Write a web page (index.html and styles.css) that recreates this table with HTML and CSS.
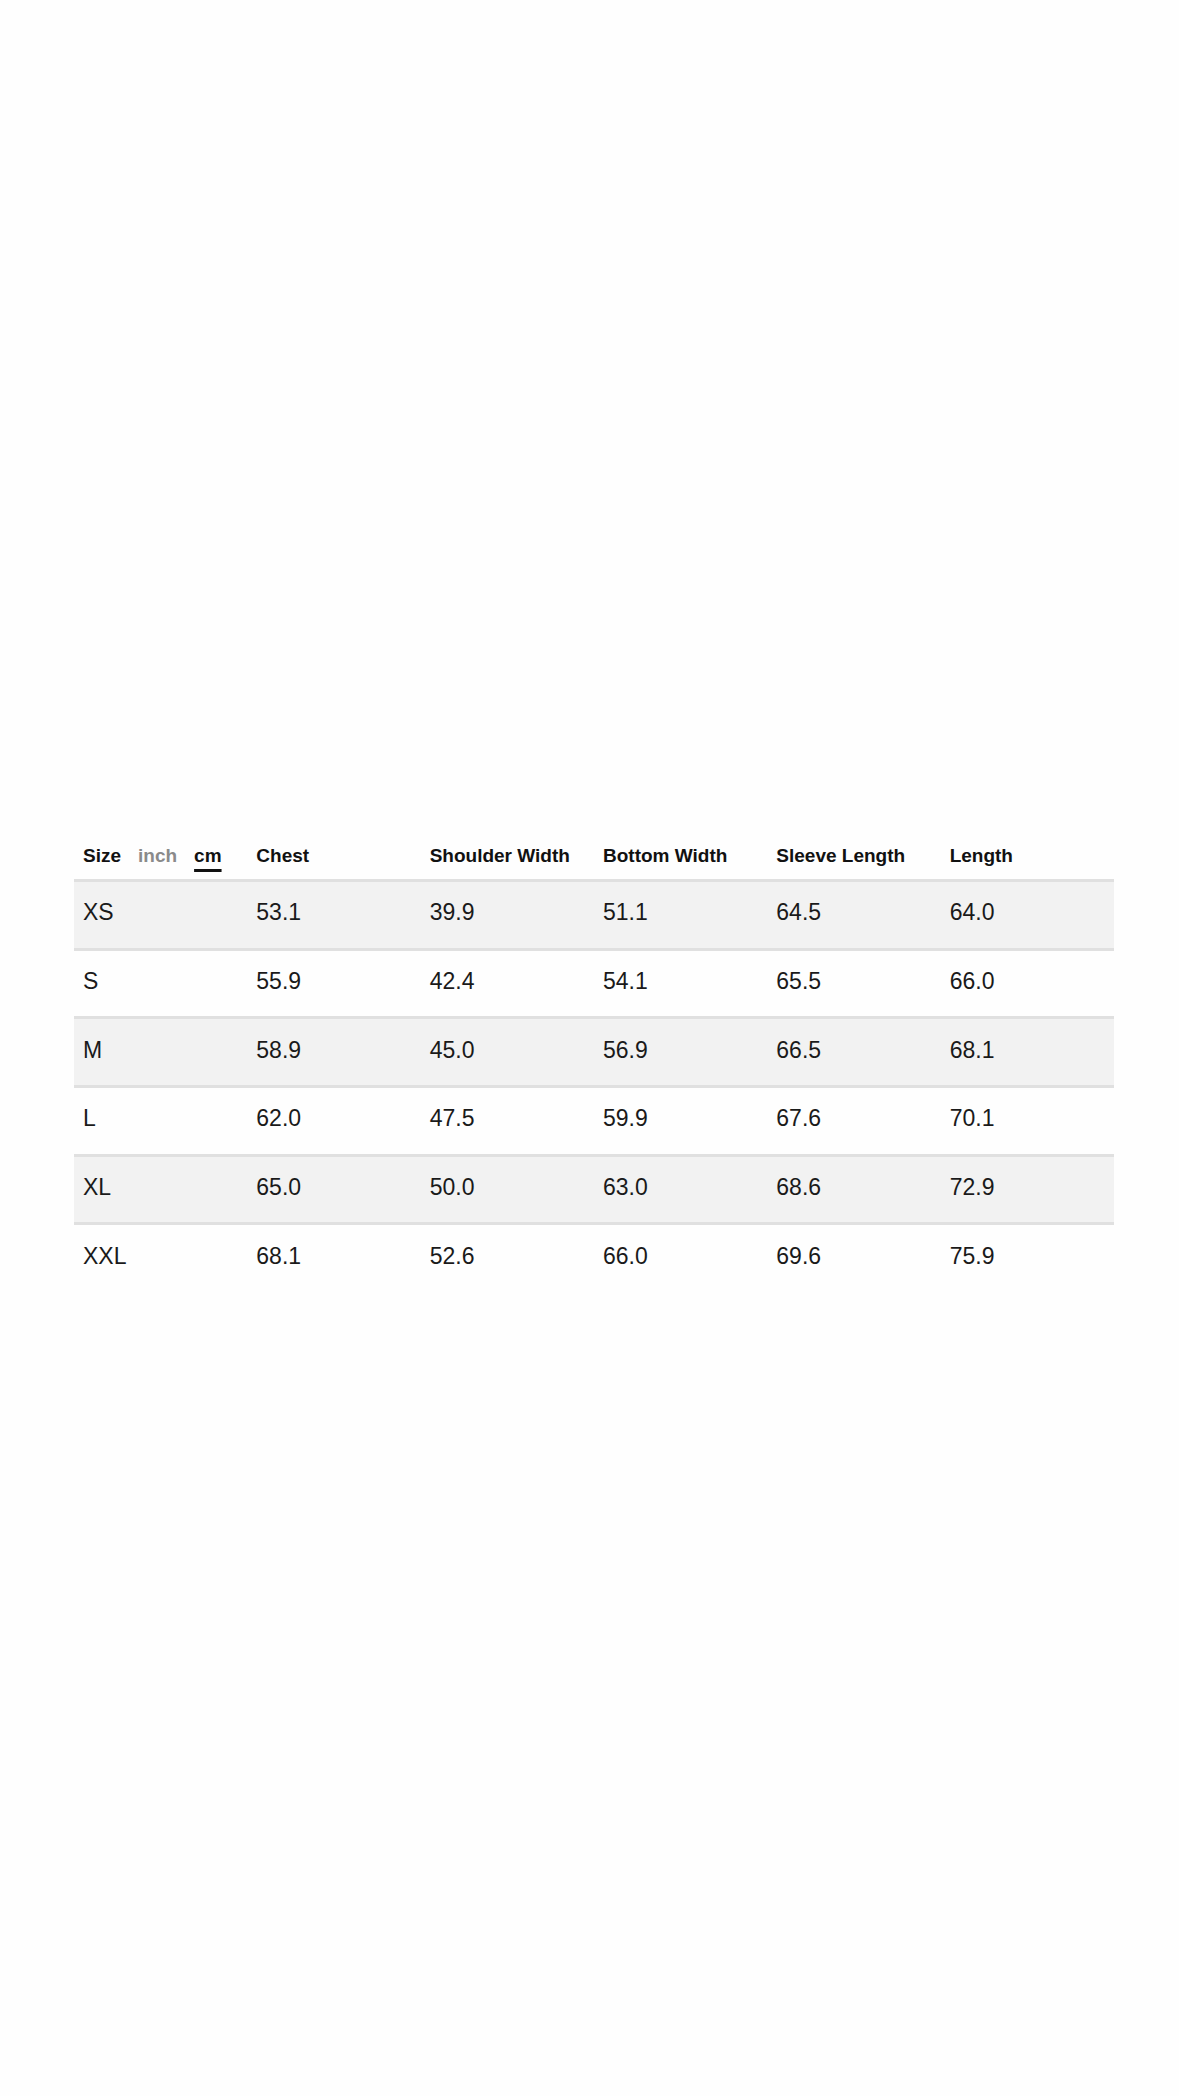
FILE: index.html
```html
<!DOCTYPE html>
<html lang="en">
<head>
<meta charset="utf-8">
<title>Size Chart</title>
<link rel="stylesheet" href="styles.css">
</head>
<body>
<main class="page">
  <section class="chart">
    <div class="row head">
      <div class="cell units">
        <span class="label">Size</span>
        <span class="unit">inch</span>
        <span class="unit active">cm</span>
      </div>
      <div class="cell">Chest</div>
      <div class="cell">Shoulder Width</div>
      <div class="cell">Bottom Width</div>
      <div class="cell">Sleeve Length</div>
      <div class="cell">Length</div>
    </div>
    <div class="row shaded">
      <div class="cell">XS</div><div class="cell">53.1</div><div class="cell">39.9</div><div class="cell">51.1</div><div class="cell">64.5</div><div class="cell">64.0</div>
    </div>
    <div class="row">
      <div class="cell">S</div><div class="cell">55.9</div><div class="cell">42.4</div><div class="cell">54.1</div><div class="cell">65.5</div><div class="cell">66.0</div>
    </div>
    <div class="row shaded">
      <div class="cell">M</div><div class="cell">58.9</div><div class="cell">45.0</div><div class="cell">56.9</div><div class="cell">66.5</div><div class="cell">68.1</div>
    </div>
    <div class="row">
      <div class="cell">L</div><div class="cell">62.0</div><div class="cell">47.5</div><div class="cell">59.9</div><div class="cell">67.6</div><div class="cell">70.1</div>
    </div>
    <div class="row shaded">
      <div class="cell">XL</div><div class="cell">65.0</div><div class="cell">50.0</div><div class="cell">63.0</div><div class="cell">68.6</div><div class="cell">72.9</div>
    </div>
    <div class="row last">
      <div class="cell">XXL</div><div class="cell">68.1</div><div class="cell">52.6</div><div class="cell">66.0</div><div class="cell">69.6</div><div class="cell">75.9</div>
    </div>
  </section>
</main>
</body>
</html>
```

FILE: styles.css
```css
html, body {
  margin: 0;
  padding: 0;
  background: #fefefe;
}

body {
  font-family: "Liberation Sans", Arial, sans-serif;
  color: #1a1a1a;
}

.page {
  width: 1179px;
  height: 2096px;
  box-sizing: border-box;
  padding-top: 830px;
  padding-left: 74px;
}

.chart {
  width: 1040px;
}

.row {
  display: grid;
  grid-template-columns: repeat(6, 1fr);
  height: 65.7px;
  border-bottom: 3px solid #e0e0e0;
}

.row.last {
  border-bottom: none;
}

.row.shaded {
  background: #f2f2f2;
}

.cell {
  display: flex;
  align-items: center;
  padding-left: 9px;
  padding-bottom: 4px;
  box-sizing: border-box;
  font-size: 23px;
  white-space: nowrap;
}

.row.head {
  height: 49px;
}

.row.head .cell {
  padding-top: 3px;
  padding-bottom: 0;
  font-size: 19px;
  font-weight: bold;
  color: #111;
}

.units {
  gap: 17px;
}

.unit {
  color: #8a8a8a;
}

.unit.active {
  color: #111;
  text-decoration: underline;
  text-decoration-thickness: 2.5px;
  text-underline-offset: 7px;
}
```
